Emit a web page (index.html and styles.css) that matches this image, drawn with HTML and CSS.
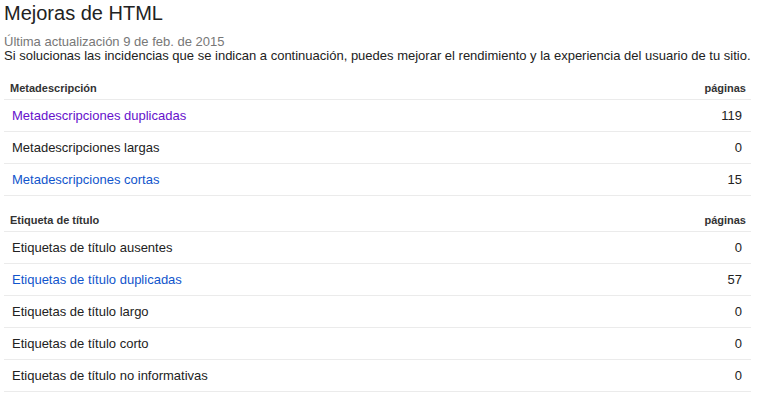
FILE: index.html
```html
<!DOCTYPE html>
<html lang="es">
<head>
<meta charset="utf-8">
<title>Mejoras de HTML</title>
<link rel="stylesheet" href="styles.css">
</head>
<body>
<div class="page">
  <h1 class="title">Mejoras de HTML</h1>
  <div class="intro">
    <div class="updated">Última actualización 9 de feb. de 2015</div>
    <div class="desc">Si solucionas las incidencias que se indican a continuación, puedes mejorar el rendimiento y la experiencia del usuario de tu sitio.</div>
  </div>
  <div class="table">
    <div class="head"><span>Metadescripción</span><span>páginas</span></div>
    <div class="row"><a class="link visited" href="#">Metadescripciones duplicadas</a><span class="num">119</span></div>
    <div class="row"><span>Metadescripciones largas</span><span class="num">0</span></div>
    <div class="row"><a class="link" href="#">Metadescripciones cortas</a><span class="num">15</span></div>
    <div class="head"><span>Etiqueta de título</span><span>páginas</span></div>
    <div class="row"><span>Etiquetas de título ausentes</span><span class="num">0</span></div>
    <div class="row"><a class="link" href="#">Etiquetas de título duplicadas</a><span class="num">57</span></div>
    <div class="row"><span>Etiquetas de título largo</span><span class="num">0</span></div>
    <div class="row"><span>Etiquetas de título corto</span><span class="num">0</span></div>
    <div class="row"><span>Etiquetas de título no informativas</span><span class="num">0</span></div>
  </div>
</div>
</body>
</html>
```
FILE: styles.css
```css
* { box-sizing: border-box; }
html, body { margin: 0; padding: 0; background: #fff; }
body {
  font-family: "Liberation Sans", Arial, sans-serif;
  font-size: 13px;
  color: #222;
}
.page {
  width: 751px;
  padding-left: 4px;
}
.title {
  margin: 0;
  padding-top: 1px;
  font-size: 20px;
  line-height: 24px;
  font-weight: normal;
  color: #222;
}
.intro {
  margin-top: 10px;
  line-height: 14px;
}
.updated { color: #777; }
.desc { color: #222; }
.table {
  margin-top: 1px;
  display: flex;
  flex-direction: column;
}
.head {
  display: flex;
  justify-content: space-between;
  align-items: flex-end;
  height: 36px;
  padding: 18px 5px 4px 6px;
  font-size: 11px;
  line-height: 13px;
  font-weight: bold;
  color: #333;
  border-bottom: 1px solid #ebebeb;
}
.row {
  display: flex;
  justify-content: space-between;
  align-items: center;
  height: 32px;
  padding: 0 9px 0 8px;
  border-bottom: 1px solid #ebebeb;
  color: #222;
}
.link {
  color: #1155cc;
  text-decoration: none;
}
.link.visited { color: #6611cc; }
.num { color: #222; }
```
